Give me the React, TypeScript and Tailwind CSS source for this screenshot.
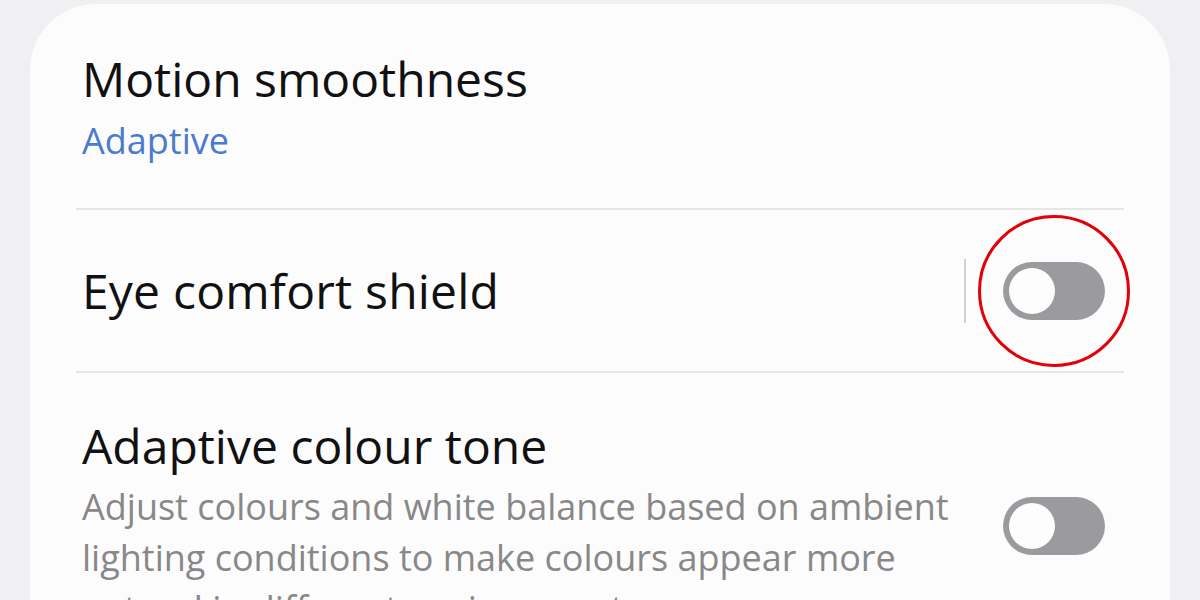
import React from 'react';

const font = { fontFamily: '"Open Sans", "Noto Sans", Arial, sans-serif' };

// plain grey switch, off state
const Toggle: React.FC<{ ring?: boolean }> = ({ ring }) => (
  <div className="relative w-[102px] h-[58px] shrink-0 rounded-full bg-[#9b9b9f] p-[6px]">
    <div className="w-[46px] h-[46px] rounded-full bg-[#fdfdfd]"></div>
    {ring && (
      <div className="absolute left-1/2 top-1/2 -translate-x-1/2 -translate-y-1/2 w-[152px] h-[152px] rounded-full border-[3px] border-[#e2000b]"></div>
    )}
  </div>
);

const Divider = () => <div className="h-[2px] bg-[#e6e6e8]"></div>;

export default function App() {
  return (
    <div className="w-[1200px] h-[600px] overflow-hidden bg-[#f0f0f2] pt-[4px] px-[30px]" style={font}>
      <div className="h-[700px] bg-[#fcfcfd] rounded-t-[66px] px-[46px] pt-[47px]">
        {/* Motion smoothness */}
        <div className="pl-[6px] pb-[45px]">
          <div className="text-[48px] leading-[56px] text-[#111111]">Motion smoothness</div>
          <div className="mt-[12px] text-[36px] leading-[44px] text-[#4a7bcc]">Adaptive</div>
        </div>
        <Divider />

        {/* Eye comfort shield */}
        <div className="h-[161px] flex items-center pl-[6px] pr-[19px]">
          <div className="flex-1 text-[48px] tracking-[0.2px] leading-[56px] text-[#111111]">Eye comfort shield</div>
          <div className="w-[2px] h-[64px] bg-[#d2d2d4] mr-[37px]"></div>
          <Toggle ring />
        </div>
        <Divider />

        {/* Adaptive colour tone */}
        <div className="flex items-center pl-[6px] pr-[19px] pt-[45px]">
          <div className="w-[895px]">
            <div className="text-[48px] leading-[56px] text-[#111111]">Adaptive colour tone</div>
            <div className="mt-[7px] text-[36px] leading-[51px] text-[#888889]">
              Adjust colours and white balance based on ambient lighting conditions to make colours appear more natural in different environments.
            </div>
          </div>
          <div className="ml-auto">
            <Toggle />
          </div>
        </div>
      </div>
    </div>
  );
}
